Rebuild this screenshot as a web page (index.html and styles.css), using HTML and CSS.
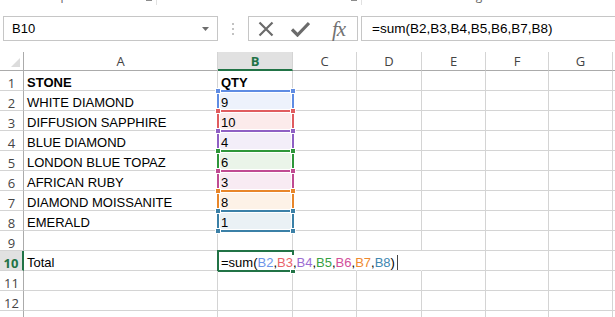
FILE: index.html
```html
<!DOCTYPE html>
<html lang="en">
<head>
    <meta charset="UTF-8">
    <title>Stones - Excel</title>
    <link rel="stylesheet" href="styles.css">
</head>
<body>
    <div class="ribbon">
        <div class="grp grp-clip"><span class="lbl">Clipboard</span><i class="launch"></i></div>
        <div class="grp grp-font"><span class="lbl">Font</span><i class="launch"></i></div>
        <div class="grp grp-align"><span class="lbl">Alignment</span></div>
    </div>

    <div class="fbar">
        <div class="namebox">
            <span>B10</span>
            <svg class="drop" width="7" height="4" viewBox="0 0 7 4"><path d="M0 0h7L3.5 4z" fill="#6d6d6d"/></svg>
        </div>
        <div class="grip"><i></i><i></i><i></i></div>
        <div class="btns">
            <svg width="16" height="16" viewBox="0 0 16 16"><path d="M1.5 1.5l13 13M14.5 1.5l-13 13" stroke="#6b6b6b" stroke-width="2.2" fill="none"/></svg>
            <svg width="19" height="16" viewBox="0 0 19 16"><path d="M1 8.5l5.5 5.5L18 2" stroke="#6b6b6b" stroke-width="3.2" fill="none"/></svg>
            <span class="fx">fx</span>
        </div>
        <div class="formula">=sum(B2,B3,B4,B5,B6,B7,B8)</div>
    </div>

    <div class="sheet">
        <!-- header -->
        <div class="corner"><i></i></div>
        <div class="ch">A</div>
        <div class="ch sel">B</div>
        <div class="ch">C</div>
        <div class="ch">D</div>
        <div class="ch">E</div>
        <div class="ch">F</div>
        <div class="ch">G</div>
        <div class="ch end"></div>

        <div class="rh">1</div>
        <div class="c b">STONE</div><div class="c b">QTY</div>
        <div class="c"></div><div class="c"></div><div class="c"></div><div class="c"></div><div class="c"></div><div class="c end"></div>

        <div class="rh">2</div>
        <div class="c">WHITE DIAMOND</div>
        <div class="c rng r2">9<i class="h tl"></i><i class="h tr"></i><i class="h bl"></i><i class="h br"></i></div>
        <div class="c"></div><div class="c"></div><div class="c"></div><div class="c"></div><div class="c"></div><div class="c end"></div>

        <div class="rh">3</div>
        <div class="c">DIFFUSION SAPPHIRE</div>
        <div class="c rng r3">10<i class="h tl"></i><i class="h tr"></i><i class="h bl"></i><i class="h br"></i></div>
        <div class="c"></div><div class="c"></div><div class="c"></div><div class="c"></div><div class="c"></div><div class="c end"></div>

        <div class="rh">4</div>
        <div class="c">BLUE DIAMOND</div>
        <div class="c rng r4">4<i class="h tl"></i><i class="h tr"></i><i class="h bl"></i><i class="h br"></i></div>
        <div class="c"></div><div class="c"></div><div class="c"></div><div class="c"></div><div class="c"></div><div class="c end"></div>

        <div class="rh">5</div>
        <div class="c">LONDON BLUE TOPAZ</div>
        <div class="c rng r5">6<i class="h tl"></i><i class="h tr"></i><i class="h bl"></i><i class="h br"></i></div>
        <div class="c"></div><div class="c"></div><div class="c"></div><div class="c"></div><div class="c"></div><div class="c end"></div>

        <div class="rh">6</div>
        <div class="c">AFRICAN RUBY</div>
        <div class="c rng r6">3<i class="h tl"></i><i class="h tr"></i><i class="h bl"></i><i class="h br"></i></div>
        <div class="c"></div><div class="c"></div><div class="c"></div><div class="c"></div><div class="c"></div><div class="c end"></div>

        <div class="rh">7</div>
        <div class="c">DIAMOND MOISSANITE</div>
        <div class="c rng r7">8<i class="h tl"></i><i class="h tr"></i><i class="h bl"></i><i class="h br"></i></div>
        <div class="c"></div><div class="c"></div><div class="c"></div><div class="c"></div><div class="c"></div><div class="c end"></div>

        <div class="rh">8</div>
        <div class="c">EMERALD</div>
        <div class="c rng r8">1<i class="h tl"></i><i class="h tr"></i><i class="h bl"></i><i class="h br"></i></div>
        <div class="c"></div><div class="c"></div><div class="c"></div><div class="c"></div><div class="c"></div><div class="c end"></div>

        <div class="rh">9</div>
        <div class="c"></div><div class="c"></div>
        <div class="c"></div><div class="c"></div><div class="c"></div><div class="c"></div><div class="c"></div><div class="c end"></div>

        <div class="rh act">10</div>
        <div class="c">Total</div>
        <div class="c edit"><span class="etext">=sum(<span class="f2">B2</span>,<span class="f3">B3</span>,<span class="f4">B4</span>,<span class="f5">B5</span>,<span class="f6">B6</span>,<span class="f7">B7</span>,<span class="f8">B8</span>)<i class="caret"></i></span><i class="fill"></i></div>
        <div class="c nol"></div><div class="c nol"></div><div class="c"></div><div class="c"></div><div class="c"></div><div class="c end"></div>

        <div class="rh">11</div>
        <div class="c"></div><div class="c"></div>
        <div class="c"></div><div class="c"></div><div class="c"></div><div class="c"></div><div class="c"></div><div class="c end"></div>

        <div class="rh">12</div>
        <div class="c"></div><div class="c"></div>
        <div class="c"></div><div class="c"></div><div class="c"></div><div class="c"></div><div class="c"></div><div class="c end"></div>

        <div class="rh">13</div>
        <div class="c"></div><div class="c"></div>
        <div class="c"></div><div class="c"></div><div class="c"></div><div class="c"></div><div class="c"></div><div class="c end"></div>
    </div>
</body>
</html>
```

FILE: styles.css
```css
* {
    margin: 0;
    padding: 0;
    box-sizing: border-box;
}
html, body {
    width: 615px;
    height: 317px;
    overflow: hidden;
    background: #fff;
}
body {
    font-family: "Liberation Sans", Arial, sans-serif;
    color: #000;
}

/* ribbon group labels, cut off at the top */
.ribbon {
    height: 5px;
    overflow: hidden;
    display: flex;
    font-family: "Open Sans", sans-serif;
    font-size: 12px;
    color: #666;
}
.grp {
    display: flex;
    margin-top: -13px;
    height: 18px;
    align-items: flex-end;
    border-right: 1px solid #e1e1e1;
}
.grp-clip { width: 157px; padding-left: 47px; }
.grp-font { width: 205px; padding-left: 83px; }
.grp-align { width: 240px; padding-left: 100px; border-right: 0; }
.lbl { line-height: 18px; }
.launch {
    width: 6px;
    height: 6px;
    border-right: 1px solid #8c8c8c;
    border-bottom: 1px solid #8c8c8c;
    margin-left: auto;
    margin-right: 4px;
    margin-bottom: 4px;
}

/* formula bar */
.fbar {
    display: flex;
    align-items: center;
    height: 25px;
    margin-top: 11px;
    padding-left: 3px;
}
.namebox {
    width: 215px;
    height: 25px;
    border: 1px solid #c6c6c6;
    display: flex;
    align-items: center;
    padding: 0 8px;
    font-size: 13px;
    justify-content: space-between;
}
.grip {
    width: 30px;
    display: flex;
    flex-direction: column;
    align-items: center;
    gap: 3px;
}
.grip i {
    width: 2px;
    height: 2px;
    background: #c2c2c2;
}
.btns {
    width: 110px;
    height: 25px;
    border: 1px solid #c6c6c6;
    display: flex;
    align-items: center;
    padding-left: 9px;
    gap: 17px;
}
.fx {
    font-family: "Liberation Serif", serif;
    font-style: italic;
    font-size: 21px;
    color: #727272;
    letter-spacing: -1px;
    margin-left: 5px;
    line-height: 20px;
}
.formula {
    flex: 1;
    height: 25px;
    margin-left: 3px;
    border: 1px solid #c6c6c6;
    border-right: 0;
    font-size: 13.5px;
    line-height: 23px;
    padding-left: 10px;
}

/* the grid */
.sheet {
    margin-top: 11px;
    display: grid;
    grid-template-columns: 24px 194px 75px 64px 65px 64px 63px 64px 1fr;
    grid-template-rows: 19px;
    grid-auto-rows: 20px;
    font-size: 13px;
}
.corner {
    border-right: 1px solid #ababab;
    border-bottom: 1px solid #ababab;
    position: relative;
}
.corner i {
    position: absolute;
    right: 3px;
    bottom: 3px;
    width: 0;
    height: 0;
    border-left: 9px solid transparent;
    border-bottom: 9px solid #dcdcdc;
}
.ch {
    border-right: 1px solid #d4d4d4;
    border-bottom: 1px solid #ababab;
    text-align: center;
    font-family: "Open Sans", sans-serif;
    font-size: 13px;
    line-height: 18px;
    color: #444;
}
.ch.sel {
    background: #e1e1e1;
    border-bottom: 2px solid #217346;
    color: #217346;
    font-weight: bold;
}
.ch.end, .c.end { border-right: 0; }
.rh {
    border-right: 1px solid #ababab;
    border-bottom: 1px solid #d4d4d4;
    text-align: center;
    font-family: "Open Sans", sans-serif;
    font-size: 13px;
    padding-top: 4px;
    line-height: 16px;
    color: #444;
}
.rh.act {
    background: #e1e1e1;
    border-right: 2px solid #217346;
    color: #217346;
    font-weight: bold;
}
.c {
    border-right: 1px solid #d4d4d4;
    border-bottom: 1px solid #d4d4d4;
    padding: 4px 3px 0;
    line-height: 16px;
    white-space: nowrap;
    position: relative;
}
.c.b { font-weight: bold; }
.c.nol { border-right-color: transparent; }

/* coloured reference ranges */
.rng { background: var(--bg); }
.rng::before {
    content: "";
    position: absolute;
    top: -1px;
    left: -1px;
    right: -2px;
    bottom: -2px;
    border: 2px solid var(--rc);
    box-shadow: inset 0 0 0 1px #fff;
}
.h {
    position: absolute;
    width: 6px;
    height: 6px;
    background: var(--rc);
    border: 1px solid #fff;
    z-index: 1;
}
.h.tl { top: -3px; left: -3px; }
.h.tr { top: -3px; right: -4px; }
.h.bl { bottom: -4px; left: -3px; }
.h.br { bottom: -4px; right: -4px; }
.r2 { --rc: #5f8ce3; --bg: #edf2fc; }
.r3 { --rc: #e05c5f; --bg: #fcebeb; }
.r4 { --rc: #8f60c4; --bg: #f3eef9; }
.r5 { --rc: #2e963a; --bg: #eaf4e9; }
.r6 { --rc: #c04b92; --bg: #f8ebf3; }
.r7 { --rc: #e8862a; --bg: #fdf2e7; }
.r8 { --rc: #3b80a7; --bg: #eaf1f5; }

/* cell in edit mode */
.edit::before {
    content: "";
    position: absolute;
    top: -1px;
    left: -1px;
    right: -2px;
    bottom: -2px;
    border: 2px solid #217346;
}
.etext {
    position: relative;
    z-index: 2;
    background: #fff;
    padding-right: 2px;
}
.caret {
    display: inline-block;
    width: 1px;
    height: 15px;
    background: #444;
    vertical-align: -3px;
    margin-left: 2px;
}
.fill {
    position: absolute;
    right: -4px;
    bottom: -4px;
    width: 6px;
    height: 6px;
    background: #217346;
    border: 1px solid #fff;
    z-index: 1;
}
.f2 { color: #6d95e9; }
.f3 { color: #e9636a; }
.f4 { color: #9c6cd2; }
.f5 { color: #37a044; }
.f6 { color: #d24e9b; }
.f7 { color: #ef8a2f; }
.f8 { color: #4087b1; }
```
